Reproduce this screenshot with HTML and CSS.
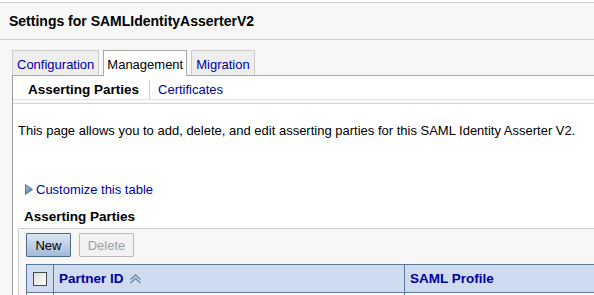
FILE: index.html
```html
<!DOCTYPE html>
<html>
<head>
<meta charset="utf-8">
<link rel="stylesheet" href="styles.css">
</head>
<body>
<div class="title-bar"><h1 class="title">Settings for SAMLIdentityAsserterV2</h1></div>
<div class="tabs-area">
  <div class="tabs">
    <a class="tab">Configuration</a>
    <span class="tab tab-active">Management</span>
    <a class="tab">Migration</a>
  </div>
  <div class="panel">
    <div class="subtabs">
      <span class="subtab-active">Asserting Parties</span>
      <span class="sep"></span>
      <a class="subtab">Certificates</a>
    </div>
    <div class="subtab-rule"></div>
    <div class="content">
      <p class="desc">This page allows you to add, delete, and edit asserting parties for this SAML Identity Asserter V2.</p>
      <div class="customize">
        <svg class="tri" width="8" height="11" viewBox="0 0 8 11">
          <defs><linearGradient id="tg" x1="0" y1="0" x2="1" y2="1"><stop offset="0" stop-color="#b9c9e6"/><stop offset="1" stop-color="#3d5f9c"/></linearGradient></defs>
          <path d="M0.5 0.5 L7.5 5.5 L0.5 10.5 Z" fill="url(#tg)" stroke="#5a76a8" stroke-width="1"/>
        </svg>
        <a class="link">Customize this table</a>
      </div>
      <h2 class="section-title">Asserting Parties</h2>
      <div class="table-box">
        <div class="toolbar">
          <button class="btn btn-primary">New</button>
          <button class="btn btn-disabled">Delete</button>
        </div>
        <table class="grid">
          <tr>
            <th class="col-check"><span class="checkbox"></span></th>
            <th class="col-partner">Partner ID <svg class="sort" width="13" height="10" viewBox="0 0 13 10"><path d="M1.5 5.5 L6.5 1 L11.5 5.5" fill="none" stroke="#7288a8" stroke-width="1.4"/><path d="M1.5 9 L6.5 4.5 L11.5 9" fill="none" stroke="#7288a8" stroke-width="1.4"/></svg></th>
            <th class="col-profile">SAML Profile</th>
          </tr>
          <tr class="row">
            <td class="col-check"></td>
            <td></td>
            <td></td>
          </tr>
        </table>
      </div>
    </div>
  </div>
</div>
</body>
</html>
```
FILE: styles.css
```css
html, body {
  margin: 0;
  padding: 0;
  background: #ffffff;
  font-family: "Liberation Sans", Arial, sans-serif;
  font-size: 13px;
  color: #000;
  overflow: hidden;
}
.title-bar {
  margin-top: 2px;
  height: 36px;
  border-top: 1px solid #cccccc;
  border-bottom: 1px solid #cccccc;
  background: #f7f7f7;
  display: flex;
  align-items: center;
  padding-left: 9px;
}
.title {
  margin: 0;
  font-size: 14px;
  font-weight: bold;
  line-height: 16px;
}
.tabs-area {
  background: #f7f7f7;
  padding-top: 10px;
  min-height: 260px;
}
.tabs {
  display: flex;
  gap: 4px;
  padding-left: 12px;
  position: relative;
  z-index: 1;
}
.tab {
  display: block;
  height: 25px;
  box-sizing: border-box;
  padding: 0 4px;
  line-height: 27px;
  border: 1px solid #cccccc;
  border-bottom: none;
  background: #eeeeee;
  color: #0000a0;
}
.tab-active {
  background: #ffffff;
  color: #000;
  border-color: #a8a8a8;
  height: 26px;
  margin-bottom: -1px;
  padding: 0 3px;
}
.panel {
  margin-left: 12px;
  border-left: 1px solid #999999;
  border-top: 1px solid #a8a8a8;
  background: #ffffff;
  min-height: 220px;
}
.subtabs {
  height: 24px;
  box-sizing: border-box;
  padding-top: 3px;
  display: flex;
  align-items: center;
  padding-left: 15px;
}
.subtab-active {
  font-weight: bold;
  font-size: 13.5px;
}
.sep {
  width: 1px;
  height: 19px;
  background: #cccccc;
  margin: 0 8px 0 10px;
}
.subtab {
  color: #0000a0;
}
.subtab-rule {
  height: 3px;
  background: #fcf9fc;
  border-top: 1px solid #e4e4e4;
  border-bottom: 1px solid #d3d3d3;
  margin-top: -1px;
}
.content {
  padding-left: 5px;
}
.desc {
  margin: 0;
  padding-top: 19px;
  line-height: 16px;
}
.customize {
  margin-top: 42px;
  display: flex;
  align-items: center;
  gap: 3px;
  padding-left: 7px;
  height: 16px;
}
.tri {
  display: block;
}
.link {
  color: #0000a0;
}
.section-title {
  margin: 12px 0 0 0;
  padding-left: 6px;
  font-size: 13.5px;
  font-weight: bold;
  line-height: 16px;
}
.table-box {
  margin-top: 3px;
  border-top: 1px solid #cccccc;
  border-left: 1px solid #cccccc;
  background: #f7f7f7;
  padding: 4px 0 0 7px;
}
.toolbar {
  display: flex;
  gap: 8px;
  margin-bottom: 7px;
}
.btn {
  height: 24px;
  box-sizing: border-box;
  font-family: "Liberation Sans", Arial, sans-serif;
  font-size: 13px;
  padding: 0;
  margin: 0;
  border-radius: 1px;
}
.btn-primary {
  width: 45px;
  border: 1px solid #4d6b8c;
  background: linear-gradient(#dbe5f2, #a5bad7);
  color: #000;
}
.btn-disabled {
  width: 55px;
  border: 1px solid #bbbbbb;
  background: #f2f2f2;
  color: #a0a0a0;
}
.grid {
  border-collapse: collapse;
  width: 100%;
  background: #ffffff;
}
.grid th {
  height: 28px;
  box-sizing: border-box;
  background: #cfdbee;
  border-top: 1px solid #5b7a9a;
  border-bottom: 1px solid #5b7a9a;
  border-left: 1px solid #5b7a9a;
  text-align: left;
  font-size: 13.5px;
  font-weight: bold;
  color: #0000a0;
  padding: 0 0 0 5px;
  vertical-align: middle;
}
.grid th.col-check {
  width: 27px;
  padding: 0;
  text-align: center;
}
.col-partner {
  width: 351px;
}
.checkbox {
  display: inline-block;
  width: 12px;
  height: 12px;
  border: 1px solid #4a4a4a;
  background: linear-gradient(135deg, #dcdcdc, #ffffff);
  vertical-align: middle;
  margin-top: -1px;
}
.sort {
  vertical-align: -1px;
  margin-left: 2px;
}
.grid td {
  height: 24px;
  border-left: 1px solid #5b7a9a;
  background: #ffffff;
}
```
